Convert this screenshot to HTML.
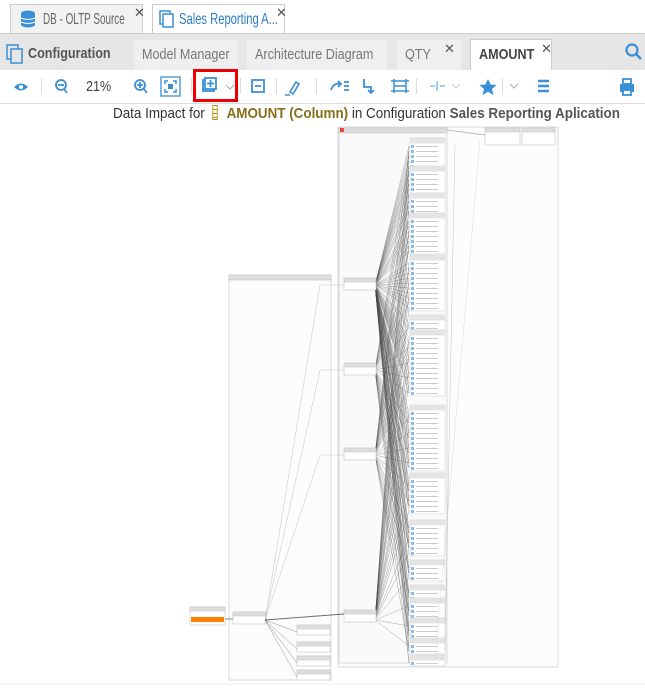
<!DOCTYPE html>
<html><head><meta charset="utf-8"><style>
*{box-sizing:border-box;margin:0;padding:0}
body{width:645px;height:688px;overflow:hidden;background:#fff;font-family:"Liberation Sans",sans-serif;position:relative}
.abs{position:absolute}
.c{display:inline-block;white-space:nowrap;transform:scaleX(.84);transform-origin:left center}
.tab1{position:absolute;top:4px;height:30px;border:1px solid #ccc;border-bottom:none;background:#f2f2f2;font-size:16px;color:#666;padding:6px 0 0 32px;white-space:nowrap;overflow:hidden}
.tab1 .c{transform:scaleX(.7)}
.x{position:absolute;font-size:13px;color:#555}
.t2{position:absolute;top:40px;height:30px;background:#efefef;font-size:15px;color:#777;padding:6px 8px 0;white-space:nowrap;overflow:hidden}
.sep{position:absolute;top:78px;width:1px;height:16px;background:#ddd}
</style></head><body>
<div class="abs" style="left:0;top:0;width:645px;height:33px;background:#fff"></div>
<div class="tab1" style="left:10px;width:133px"><span class="c" style="transform:scaleX(.62)">DB - OLTP Source</span></div>
<svg class="abs" style="left:20px;top:10px" width="16" height="18"><ellipse cx="8" cy="3.5" rx="7" ry="3" fill="#3b8fd6"/><rect x="1" y="3.5" width="14" height="11" fill="#3b8fd6"/><ellipse cx="8" cy="14.5" rx="7" ry="3" fill="#3b8fd6"/><path d="M1 8q7 3 14 0M1 12q7 3 14 0" stroke="#fff" fill="none"/></svg>
<div class="x" style="left:134px;top:5px">✕</div>
<div class="tab1" style="left:152px;width:133px;background:#fff;color:#2a7cc7;padding-left:26px"><span class="c">Sales Reporting A...</span></div>
<svg class="abs" style="left:159px;top:10px" width="16" height="18"><rect x="1" y="1" width="10" height="13" fill="#fff" stroke="#3b8fd6" stroke-width="1.5"/><rect x="4" y="4" width="10" height="13" fill="#fff" stroke="#3b8fd6" stroke-width="1.5"/></svg>
<div class="x" style="left:276px;top:5px">✕</div>
<div class="abs" style="left:0;top:33px;width:645px;height:37px;background:#e6e6e6;border-top:1px solid #ccc"></div>
<svg class="abs" style="left:6px;top:44px" width="18" height="20"><rect x="1" y="1" width="11" height="14" fill="#e6e6e6" stroke="#3b8fd6" stroke-width="1.5"/><rect x="5" y="5" width="11" height="14" fill="#e6e6e6" stroke="#3b8fd6" stroke-width="1.5"/></svg>
<div class="abs" style="left:28px;top:45px;font-size:15px;font-weight:bold;color:#555"><span class="c">Configuration</span></div>
<div class="t2" style="left:134px;width:104px"><span class="c">Model Manager</span></div>
<div class="t2" style="left:247px;width:140px"><span class="c">Architecture Diagram</span></div>
<div class="t2" style="left:397px;width:64px"><span class="c">QTY</span></div><div class="x" style="left:444px;top:41px">✕</div>
<div class="t2" style="left:470px;width:82px;background:#fff;color:#444;font-weight:bold;border:1px solid #ccc;border-bottom:none;top:39px;height:31px"><span class="c">AMOUNT</span></div><div class="x" style="left:541px;top:41px">✕</div>
<svg class="abs" style="left:625px;top:43px" width="18" height="18"><circle cx="7" cy="7" r="5.5" stroke="#3b8fd6" stroke-width="2.2" fill="none"/><path d="M11 11l5 5" stroke="#3b8fd6" stroke-width="2.5"/></svg>
<div class="abs" style="left:0;top:70px;width:645px;height:34px;background:#fff;border-bottom:1px solid #ddd"></div>
<svg class="abs" style="left:0;top:70px" width="645" height="34" fill="none" stroke="#3b8fd6" stroke-width="1.8">
<path d="M14 17q7-7 14 0q-7 7-14 0z" fill="#3b8fd6" stroke="none"/><circle cx="21" cy="17" r="2" fill="#fff" stroke="none"/>
<circle cx="61" cy="15" r="5"/><path d="M58 15h6M64 19l3 4"/>
<circle cx="140" cy="15" r="5"/><path d="M137 15h6M140 12v6M144 19l3 4"/>
<rect x="161" y="7" width="19" height="19" stroke-width="1.3"/><path d="M165 14v-3h3M176 14v-3h-3M165 19v3h3M176 19v3h-3" stroke-width="1.5"/><rect x="168" y="14" width="5" height="5" fill="#3b8fd6" stroke="none"/>
<rect x="203" y="10" width="11" height="11"/><rect x="205" y="8" width="11" height="11" fill="#fff"/><path d="M207 13.5h7M210.5 10v7"/><path d="M226 15l4 4 4-4" stroke="#aaa" stroke-width="1"/>
<rect x="252" y="10" width="12" height="12"/><path d="M255 16h6"/>
<path d="M290 22l6-10 3 2-6 10zM285 25h5" stroke-width="1.6"/>
<path d="M331 20q3-8 10-6M338 11l3 3-3 3M344 12h5M344 16h5M344 20h5"/>
<path d="M364 9v8h7v6M368 20l3 3 3-3"/>
<path d="M394 9v14M406 9v14M394 16h12M391 11h18M391 21h18" stroke-width="1.5"/>
<path d="M430 16h5M440 16h5M437 11v10" stroke="#9cc4ea"/><path d="M452 14l4 4 4-4" stroke="#ccc" stroke-width="1"/>
<path d="M488 9l2.5 5.5 6 .5-4.5 4 1.5 6-5.5-3.3-5.5 3.3 1.5-6-4.5-4 6-.5z" fill="#3b8fd6" stroke="none"/>
<path d="M510 14l4 4 4-4" stroke="#aaa" stroke-width="1"/>
<path d="M538 11h11M538 16h11M538 21h11" stroke-width="2.5"/>
<rect x="620" y="14" width="14" height="8" fill="#3b8fd6" stroke="none"/><rect x="623" y="9" width="8" height="5"/><rect x="623" y="20" width="8" height="5" fill="#fff"/>
</svg>
<div class="sep" style="left:41px"></div><div class="sep" style="left:191px"></div><div class="sep" style="left:240px"></div><div class="sep" style="left:276px"></div><div class="sep" style="left:316px"></div><div class="sep" style="left:416px"></div><div class="sep" style="left:502px"></div>
<div class="abs" style="left:86px;top:78px;font-size:15px;color:#444"><span class="c">21%</span></div>
<div class="abs" style="left:193px;top:69px;width:45px;height:33px;border:3px solid #e00"></div>
<div class="abs" style="left:113px;top:105px;font-size:15px;color:#333;white-space:nowrap"><span class="c" style="transform:scaleX(.895)">Data Impact for <span style="display:inline-block;width:6px;height:15px;border:1px solid #b8860b;vertical-align:-2px;margin:0 6px 0 4px;background:repeating-linear-gradient(#fff 0 3px,#b8860b 3px 4px)"></span> <b style="color:#8a6d1a">AMOUNT (Column)</b> in Configuration <b style="color:#555">Sales Reporting Aplication</b></span></div>
<svg id="d" class="abs" style="left:0;top:120px" width="645" height="568"></svg>
<script>
const s=document.getElementById('d');let h='';const o=120;
function r(x,y,w,hh,f,st){h+=`<rect x="${x}" y="${y-o}" width="${w}" height="${hh}" fill="${f||'#fff'}" stroke="${st||'#ccc'}" stroke-width="0.7"/>`}
function l(a,b,c,d,col,w,op){h+=`<line x1="${a}" y1="${b-o}" x2="${c}" y2="${d-o}" stroke="${col||'#555'}" stroke-width="${w||0.5}" opacity="${op||0.7}"/>`}
r(229,275,102,405,'#fcfcfc','#ccc');r(338,127,220,540,'#fcfcfc','#ccc');r(339,128,108,535,'#fafafa','#ccc');
r(229,275,102,5,'#ddd');r(339,128,108,5,'#ddd');h+=`<rect x="340" y="${128-o}" width="4" height="4" fill="#e44"/>`;
r(485,128,35,17);r(485,128,35,4,'#ddd');r(522,128,33,17);r(522,128,33,4,'#ddd');
const boxes=[[138,6],[166,5],[193,3],[213,7],[255,10],[315,2],[330,12],[405,12],[473,7],[520,6],[560,3],[585,2],[598,3],[618,3],[638,2],[655,1]];
const fans=[[375,285],[375,370],[375,455],[375,620]];
const rows=[];
boxes.forEach(([y,n])=>{r(410,y,35,6+n*5,'#fff','#ddd');r(410,y,35,5,'#e4e4e4','#ddd');for(let i=0;i<n;i++){const yy=y+7+i*5;rows.push(yy);h+=`<rect x="411" y="${yy-o}" width="3" height="3" fill="#8bbbe8"/><line x1="416" y1="${yy+1.5-o}" x2="438" y2="${yy+1.5-o}" stroke="#ccc" stroke-width="1"/>`}});
fans.forEach(([fx,fy],k)=>{rows.forEach((ry,i)=>{if((i+k)%3==0||k==0)l(fx,fy,409,ry+1,'#444',0.4,0.55)})});
[[344,278],[344,363],[344,448],[344,610]].forEach(([x,y])=>{r(x,y,32,12);r(x,y,32,4,'#ddd')});
r(190,607,35,18);r(190,607,35,4,'#ddd');h+=`<rect x="191" y="${617-o}" width="33" height="5" fill="#ff8000"/>`;
r(233,612,33,12);r(233,612,33,4,'#ddd');l(225,619,233,619,'#333',0.8);
[[297,625],[297,642],[297,656],[297,670]].forEach(([x,y])=>{r(x,y,33,10);r(x,y,33,4,'#ddd');l(265,620,x,y+7,'#666',0.5)});
[285,370,455].forEach(y=>{l(265,620,320,y,'#aaa',0.5);l(320,y,344,y,'#aaa',0.5)});
l(265,620,344,614,'#333',1);l(447,130,485,135,'#888',0.8);l(455,145,445,650,'#aaa',0.5);l(480,140,435,660,'#ccc',0.5);
h+=`<line x1="0" y1="${684-o}" x2="645" y2="${684-o}" stroke="#eee"/>`;
s.innerHTML=h;
</script>
</body></html>
